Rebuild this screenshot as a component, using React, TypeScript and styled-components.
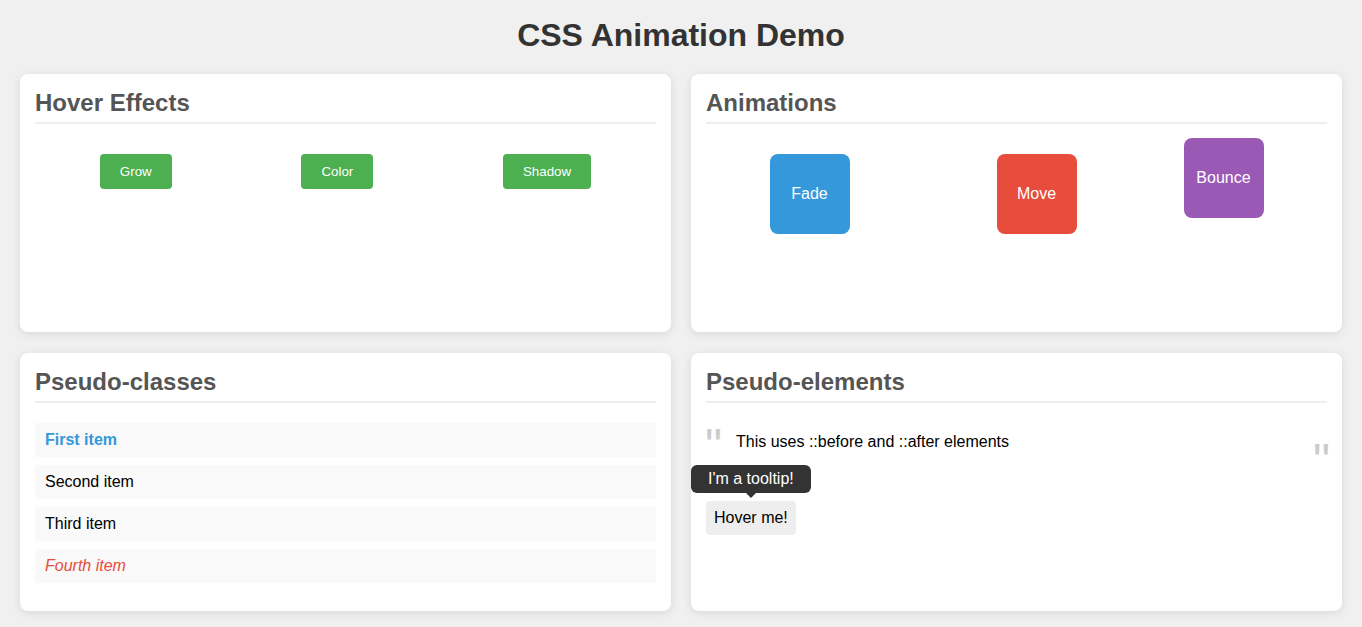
import React from "react";
import styled, { createGlobalStyle } from "styled-components";

const Global = createGlobalStyle`
  html, body {
    margin: 0;
    padding: 0;
    background: #f0f0f0;
    font-family: "Liberation Sans", Arial, sans-serif;
  }
  * { box-sizing: border-box; }
`;

const Page = styled.div`
  padding: 17px 20px 16px;
`;

const Title = styled.h1`
  margin: 0 0 20px;
  text-align: center;
  font-size: 32px;
  font-weight: bold;
  color: #333;
  line-height: normal;
`;

const Grid = styled.div`
  display: grid;
  grid-template-columns: 1fr 1fr;
  column-gap: 20px;
  row-gap: 21px;
`;

const Card = styled.section`
  background: #fff;
  border-radius: 8px;
  padding: 15px;
  min-height: 258px;
  box-shadow: 0 2px 10px rgba(0, 0, 0, 0.1);
`;

const CardTitle = styled.h2`
  margin: 0 0 20px;
  padding-bottom: 5px;
  border-bottom: 2px solid #eee;
  font-size: 24px;
  font-weight: bold;
  color: #555;
  line-height: normal;
`;

const Row = styled.div`
  display: flex;
  justify-content: space-around;
  align-items: flex-start;
  padding-top: 10px;
`;

const GreenButton = styled.button`
  background: #4caf50;
  color: #fff;
  border: none;
  border-radius: 4px;
  padding: 10px 20px;
  font-family: "Liberation Sans", Arial, sans-serif;
  font-size: 13.333px;
  line-height: normal;
`;

const AnimBox = styled.div<{ $bg: string; $shift?: string }>`
  width: 80px;
  height: 80px;
  border-radius: 8px;
  background: ${(p) => p.$bg};
  color: #fff;
  font-size: 16px;
  display: flex;
  align-items: center;
  justify-content: center;
  transform: ${(p) => p.$shift || "none"};
`;

const List = styled.ul`
  list-style: none;
  margin: 0;
  padding: 0;
`;

const Item = styled.li<{ $variant?: "first" | "last" }>`
  background: #f9f9f9;
  padding: 8px 10px;
  margin-bottom: 8px;
  font-size: 16px;
  line-height: normal;
  color: ${(p) =>
    p.$variant === "first" ? "#3498db" : p.$variant === "last" ? "#e74c3c" : "#000"};
  font-weight: ${(p) => (p.$variant === "first" ? "bold" : "normal")};
  font-style: ${(p) => (p.$variant === "last" ? "italic" : "normal")};
`;

const Quote = styled.p`
  position: relative;
  margin: 0;
  padding: 10px 30px;
  font-size: 16px;
  line-height: normal;
  color: #000;

  &::before,
  &::after {
    content: '"';
    position: absolute;
    font-size: 48px;
    line-height: normal;
    color: #ccc;
  }
  &::before {
    left: -1px;
    top: -5px;
  }
  &::after {
    right: -3px;
    bottom: -27px;
  }
`;

const TipWrap = styled.div`
  position: relative;
  display: inline-block;
  margin-top: 40px;
`;

const HoverTarget = styled.span`
  display: inline-block;
  background: #eee;
  border-radius: 4px;
  padding: 8px;
  font-size: 16px;
  line-height: normal;
  color: #000;
`;

const Tooltip = styled.div`
  position: absolute;
  bottom: calc(100% + 8px);
  left: 50%;
  transform: translateX(-50%);
  width: 120px;
  padding: 5px;
  text-align: center;
  background: #333;
  color: #fff;
  border-radius: 6px;
  font-size: 16px;
  line-height: normal;
  white-space: nowrap;

  &::after {
    content: "";
    position: absolute;
    top: 100%;
    left: 50%;
    margin-left: -5px;
    border: 5px solid transparent;
    border-top-color: #333;
  }
`;

export default function App() {
  return (
    <>
      <Global />
      <Page>
        <Title>CSS Animation Demo</Title>
        <Grid>
          <Card>
            <CardTitle>Hover Effects</CardTitle>
            <Row>
              <GreenButton>Grow</GreenButton>
              <GreenButton>Color</GreenButton>
              <GreenButton>Shadow</GreenButton>
            </Row>
          </Card>
          <Card>
            <CardTitle>Animations</CardTitle>
            <Row>
              <AnimBox $bg="#3498db">Fade</AnimBox>
              <AnimBox $bg="#e74c3c" $shift="translateX(20px)">Move</AnimBox>
              <AnimBox $bg="#9b59b6" $shift="translateY(-16px)">Bounce</AnimBox>
            </Row>
          </Card>
          <Card>
            <CardTitle>Pseudo-classes</CardTitle>
            <List>
              <Item $variant="first">First item</Item>
              <Item>Second item</Item>
              <Item>Third item</Item>
              <Item $variant="last">Fourth item</Item>
            </List>
          </Card>
          <Card>
            <CardTitle>Pseudo-elements</CardTitle>
            <Quote>This uses ::before and ::after elements</Quote>
            <TipWrap>
              <Tooltip>I'm a tooltip!</Tooltip>
              <HoverTarget>Hover me!</HoverTarget>
            </TipWrap>
          </Card>
        </Grid>
      </Page>
    </>
  );
}
